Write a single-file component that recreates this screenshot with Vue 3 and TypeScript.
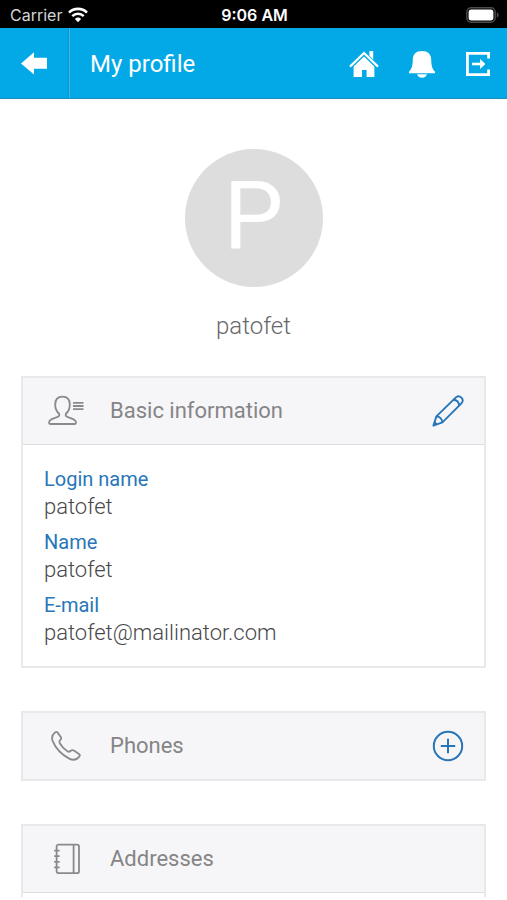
<script setup lang="ts">
interface Field {
  label: string
  value: string
}

const username = 'patofet'
const fields: Field[] = [
  { label: 'Login name', value: 'patofet' },
  { label: 'Name', value: 'patofet' },
  { label: 'E-mail', value: 'patofet@mailinator.com' },
]
</script>

<template>
  <div class="screen">
    <div class="status">
      <div class="carrier">
        <span>Carrier</span>
        <svg width="20" height="16" viewBox="0 0 20 16" fill="none" stroke="#fff" stroke-width="2.6" aria-hidden="true">
          <path d="M1 5.6a12.8 12.8 0 0 1 18 0" />
          <path d="M4.3 9.1a8.1 8.1 0 0 1 11.4 0" />
          <path d="M10 15.2 6.9 12a4.5 4.5 0 0 1 6.2 0z" fill="#fff" stroke="none" />
        </svg>
      </div>
      <time class="clock">9:06 AM</time>
      <div class="power">
        <svg width="33" height="16" viewBox="0 0 33 16" aria-hidden="true">
          <rect x=".8" y=".8" width="28.4" height="14.4" rx="4.4" fill="none" stroke="#4c4c4e" stroke-width="1.4" />
          <rect x="2.6" y="2.6" width="24.8" height="10.8" rx="2.6" fill="#fff" />
          <path d="M30.8 5.4q2 .9 2 2.6t-2 2.6z" fill="#4c4c4e" />
        </svg>
      </div>
    </div>

    <header class="bar">
      <button class="back" type="button" aria-label="Back">
        <svg width="26" height="24" viewBox="0 0 26 24" fill="#fff" aria-hidden="true">
          <path d="M0 12.400 13 1.200v5.600h13v11H13v5.800z" />
        </svg>
      </button>
      <h1>My profile</h1>
      <nav>
        <a href="#home" aria-label="Home">
          <svg width="30" height="26" viewBox="0 0 30 26" aria-hidden="true">
            <path d="M20.4 0h3.8v8.6l-3.8-3.8z" fill="#fff" />
            <path d="M1 15.6 15 2l14 13.6" fill="none" stroke="#fff" stroke-width="2.2" />
            <path d="m15 5.6 10.4 10V26h-7.8v-7h-4.6v7H4.6V15.600z" fill="#fff" />
          </svg>
        </a>
        <a href="#notifications" aria-label="Notifications">
          <svg width="26" height="27" viewBox="0 0 26 27" fill="#fff" aria-hidden="true">
            <path d="M13 0c6 0 9 3.200 9.200 8.400.2 6.400 1 9.400 3.800 12.200V22.200H0v-1.600C2.800 17.800 3.600 14.800 3.800 8.400 4 3.200 7 0 13 0z" />
            <path d="M8 23.200h10q-1.400 3.600-5 3.600t-5-3.600z" />
          </svg>
        </a>
        <a href="#logout" aria-label="Log out">
          <svg width="26" height="26" viewBox="0 0 26 26" fill="none" stroke="#fff" stroke-width="2.800" aria-hidden="true">
            <path d="M23.600 7.600V2.400H2.400v21.200h21.200v-5.200" />
            <path d="M7 13h10" stroke-width="2.600" />
            <path d="m15 8 5.400 5-5.400 5z" fill="#fff" stroke="none" />
          </svg>
        </a>
      </nav>
    </header>

    <main>
      <section class="identity">
        <div class="avatar" aria-hidden="true">P</div>
        <p>{{ username }}</p>
      </section>

      <section class="card">
        <div class="head">
          <svg class="icon" width="36" height="32" viewBox="0 0 36 32" fill="none" stroke="#8a8a8c" stroke-width="1.800" stroke-linejoin="round" aria-hidden="true">
            <path d="M11.200 18.800C8.600 16.600 7.200 13.400 7.200 9.400c0-5 2.800-7.800 7.300-7.800s7.300 2.800 7.300 7.800c0 4-1.400 7.200-4 9.400v2c1.800 1.600 5.400 2.400 7.800 3.600 1.600.8 2.400 1.800 2.400 3.400q0 1.200-1.200 1.200H2.200Q1 29 1 27.800c0-1.600.8-2.600 2.400-3.400 2.400-1.200 6-2 7.800-3.600z" />
            <path d="M25 7.800h10.500M25 11h10.500M25 14.200h10.500" />
          </svg>
          <h2>Basic information</h2>
          <button class="action" type="button" aria-label="Edit basic information">
            <svg width="32" height="32" viewBox="0 0 32 32" fill="none" stroke="#2876b8" stroke-width="1.900" stroke-linejoin="round" aria-hidden="true">
              <path d="m1.400 30.600 3-9.200L23.600 2.600c2-2 4.200-1.600 5.800 0s2 3.800 0 5.800L10.400 27.400z" />
              <path d="M4.400 21.400c3.600.2 5.600 2.400 6 6M21.400 4.800c3.600.2 5.400 2.200 5.800 5.800M2.600 27.200l2.200 2.200" />
            </svg>
          </button>
        </div>
        <dl class="details">
          <div v-for="field in fields" :key="field.label">
            <dt>{{ field.label }}</dt>
            <dd>{{ field.value }}</dd>
          </div>
        </dl>
      </section>

      <section class="card">
        <div class="head closed">
          <svg class="icon" width="36" height="32" viewBox="0 0 36 32" fill="none" stroke="#8a8a8c" stroke-width="1.800" stroke-linejoin="round" aria-hidden="true">
            <path d="M9.400 2.400 12.800 7c.8 1.200.6 2-.6 3.200-1 1-1 1.800-.4 3 1.800 3.200 4.400 6 7.600 8 1.200.8 2 .8 3-.2 1.200-1 2.200-1.200 3.400-.4l5.200 3.400c1 .8 1.200 1.600.2 2.600-3 3.800-5.800 4.200-10 2C13.600 24.400 7.600 18.200 4.600 10.800c-1.200-3.200-.8-5.800 2.400-8.400q1.400-1 2.400 0z" />
          </svg>
          <h2>Phones</h2>
          <button class="action" type="button" aria-label="Add phone">
            <svg width="32" height="32" viewBox="0 0 32 32" fill="none" stroke="#2876b8" stroke-width="2" aria-hidden="true">
              <circle cx="16" cy="16" r="14.200" />
              <path d="M16 8.800v14.400M8.800 16h14.400" />
            </svg>
          </button>
        </div>
      </section>

      <section class="card cut">
        <div class="head">
          <svg class="icon" width="36" height="32" viewBox="0 0 36 32" fill="none" stroke="#8a8a8c" stroke-width="1.800" aria-hidden="true">
            <rect x="8.600" y="1.600" width="22.400" height="28.600" rx="2" />
            <path d="M25.600 1.600v28.600M6.200 7.600h5.400M6.200 13.200h5.400M6.200 18.800h5.400M6.200 24.400h5.400" />
          </svg>
          <h2>Addresses</h2>
        </div>
      </section>
    </main>
  </div>
</template>

<style>
body {
  margin: 0;
  background: #fff;
}
</style>

<style scoped>
.screen {
  font-family: Roboto, "Liberation Sans", sans-serif;
  color: #48484a;
}
h1,
h2,
p,
dl,
dd {
  margin: 0;
  font-weight: 400;
}
svg {
  display: block;
  flex: none;
}
button {
  display: flex;
  align-items: center;
  justify-content: center;
  border: 0;
  padding: 0;
  background: none;
  cursor: pointer;
}
.status {
  display: grid;
  grid-template-columns: 1fr auto 1fr;
  align-items: center;
  height: 28px;
  padding: 2px 8px 0 10px;
  box-sizing: border-box;
  background: #000;
  color: #fff;
  font-family: Inter, Roboto, sans-serif;
  font-size: 16px;
  line-height: 20px;
}
.carrier {
  display: flex;
  align-items: center;
  gap: 6px;
  color: #d4d4d4;
}
.clock {
  font-weight: 600;
}
.power {
  justify-self: end;
}
.bar {
  display: flex;
  align-items: center;
  height: 70px;
  background: #02a9e6;
  border-bottom: 1px solid #1b8fc2;
  color: #fff;
}
.back {
  width: 69px;
  height: 100%;
  border-right: 1px solid #1791c6;
  box-shadow: 1px 0 0 #37bbed;
}
h1 {
  flex: 1;
  padding: 2px 0 0 21px;
  font-size: 24px;
  line-height: 32px;
}
nav {
  display: flex;
  align-items: center;
  gap: 30px;
  padding: 2px 16px 0 0;
}
main {
  padding: 50px 21px 0;
}
.identity {
  display: flex;
  flex-direction: column;
  align-items: center;
  gap: 23px;
  margin-bottom: 34px;
}
.avatar {
  display: grid;
  place-items: center;
  width: 138px;
  height: 138px;
  border-radius: 50%;
  background: #ddd;
  color: #fff;
  font-size: 95px;
  line-height: 134px;
  align-content: start;
}
.identity p {
  color: #68686a;
  font-size: 24px;
  font-weight: 300;
  line-height: 32px;
}
.card {
  border: 2px solid #e9e9eb;
  margin-bottom: 43px;
}
.cut {
  border-bottom: 0;
  margin-bottom: 2px;
  padding-bottom: 4px;
}
.head {
  display: flex;
  align-items: center;
  height: 66px;
  padding: 0 20px 0 25px;
  background: #f6f6f8;
  border-bottom: 1px solid #dedee0;
}
.closed {
  border-bottom: 0;
}
h2 {
  flex: 1;
  padding-left: 26px;
  color: #858587;
  font-size: 22px;
  line-height: 28px;
}
.details {
  display: grid;
  gap: 9px;
  padding: 21px 21px 20px;
  font-size: 22px;
  line-height: 27px;
}
dt {
  color: #2876b8;
  font-size: 20px;
}
dd {
  font-weight: 300;
}
</style>
